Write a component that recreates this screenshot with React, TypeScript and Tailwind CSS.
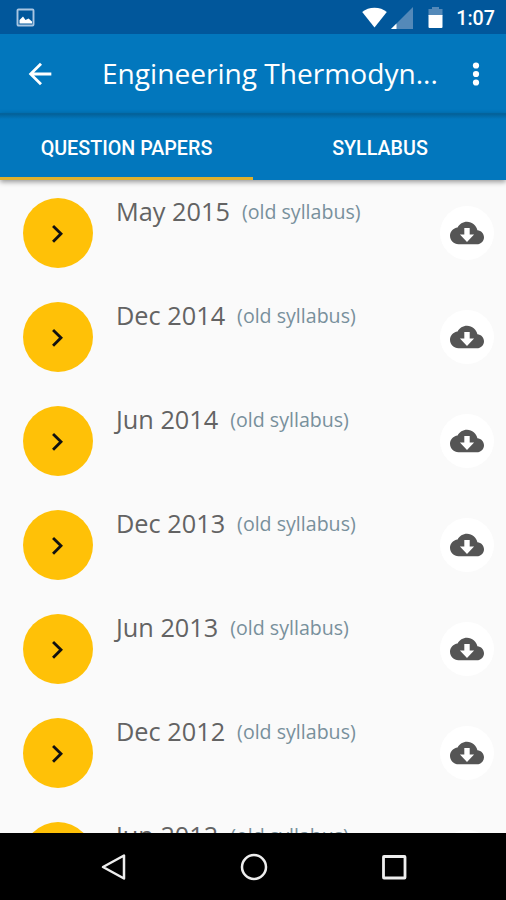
const papers = [
  'May 2015',
  'Dec 2014',
  'Jun 2014',
  'Dec 2013',
  'Jun 2013',
  'Dec 2012',
  'Jun 2012',
];

function StatusBar() {
  return (
    <div className="flex h-[34px] shrink-0 items-center bg-[#01579b] pl-4 pr-[11px] text-white">
      <svg viewBox="0 0 19 19" className="h-[19px] w-[19px]">
        <rect x="1.500" y="1.500" width="16" height="16" rx="1" fill="none" stroke="#a9c6e2" strokeWidth="1.900" />
        <path d="M3.500 15.500v-3.500L7 8.500l2.500 3.500 3-1.500 3.500 3v2z" fill="#fff" />
      </svg>
      <svg viewBox="0 0 26 21" className="ml-auto h-[21px] w-[26px]">
        <path d="M13.500 20.500 1.200 5C4.500 2.200 8.800.700 13.500.700s9 1.500 12.300 4.300z" fill="#fff" />
      </svg>
      <svg viewBox="0 0 22 22" className="ml-1 mt-0.5 h-[22px] w-[22px]">
        <path d="M0 22 22 0v22z" fill="#5489b9" />
        <path d="M0 22 5.500 16.500V22z" fill="#fff" />
      </svg>
      <svg viewBox="0 0 15 21" className="ml-[15px] h-[21px] w-[15px]">
        <path d="M4 0h7v2h3.500v7H.500V2H4z" fill="#5489b9" />
        <path d="M.500 8h14v12a1 1 0 0 1-1 1h-12a1 1 0 0 1-1-1z" fill="#fff" />
      </svg>
      <span className="ml-[13px] pt-[3px] font-['Roboto'] text-[19.7px] font-medium leading-none">1:07</span>
    </div>
  );
}

function Toolbar() {
  return (
    <div className="flex h-[79px] shrink-0 items-center bg-[#0277bd] pl-[23px] text-white">
      <svg viewBox="0 0 24 24" className="h-[34px] w-[34px]" fill="currentColor">
        <path d="M20 11H7.830l5.590-5.590L12 4l-8 8 8 8 1.410-1.410L7.830 13H20v-2z" />
      </svg>
      <h1 className="ml-[45px] w-[343px] whitespace-nowrap font-['Open_Sans'] text-[28.1px] leading-none">
        Engineering Thermodyn...
      </h1>
      <svg viewBox="0 0 24 24" className="ml-[14px] h-[34px] w-[34px]" fill="currentColor">
        <circle cx="12" cy="6" r="2.200" />
        <circle cx="12" cy="12" r="2.200" />
        <circle cx="12" cy="18" r="2.200" />
      </svg>
    </div>
  );
}

function Tabs() {
  return (
    <div className="z-10 grid h-[67px] shrink-0 grid-cols-2 border-t border-[#04639c] bg-[#0277bd] bg-[linear-gradient(#036199,#0277bd_5px)] font-['Roboto'] text-[19.7px] font-medium text-white shadow-[0_2px_5px_rgba(0,0,0,0.4)]">
      <button className="flex items-center justify-center border-b-[3px] border-[#dfb02c] pt-[6px]">
        QUESTION PAPERS
      </button>
      <button className="flex items-center justify-center border-b-[3px] border-transparent pl-px pt-[6px]">
        SYLLABUS
      </button>
    </div>
  );
}

function PaperRow({ title }: { title: string }) {
  return (
    <li className="flex h-[104px] shrink-0 items-start pl-[23px] pr-[12px] pt-[17px]">
      <div className="mt-[0.500px] flex h-[70px] w-[70px] items-center justify-center rounded-full bg-[#ffc107]">
        <svg viewBox="0 0 24 24" className="h-[34px] w-[34px]">
          <path d="M8.500 7.100l5.600 5.500-5.600 5.500" fill="none" stroke="#111" strokeWidth="2" />
        </svg>
      </div>
      <div className="ml-[23px] flex items-start gap-3 whitespace-nowrap font-['Open_Sans']">
        <span className="text-[25.3px] leading-[28px] text-[#636363]">{title}</span>
        <span className="text-[19.6px] leading-[30px] text-[#78909c]">(old syllabus)</span>
      </div>
      <div className="ml-auto mt-[9px] flex h-[54px] w-[54px] items-center justify-center rounded-full bg-white">
        <svg viewBox="0 0 24 24" className="h-[34px] w-[34px]">
          <path
            d="M19.350 10.040C18.670 6.590 15.640 4 12 4 9.110 4 6.600 5.640 5.350 8.040 2.340 8.360 0 10.910 0 14c0 3.310 2.690 6 6 6h13c2.760 0 5-2.240 5-5 0-2.640-2.050-4.780-4.650-4.960z"
            fill="#555"
          />
          <path d="M10.100 8.500h3.800v4.600h3.100L12 18.300l-5-5.200h3.100z" fill="#fff" />
        </svg>
      </div>
    </li>
  );
}

function NavBar() {
  return (
    <div className="z-10 flex h-[67px] shrink-0 items-center justify-center gap-[112px] bg-black pl-px">
      <svg viewBox="0 0 28 28" className="h-7 w-7" fill="none" stroke="#eee" strokeWidth="2.500" strokeLinejoin="round">
        <path d="M24 2.500v23L3 14z" />
      </svg>
      <svg viewBox="0 0 28 28" className="h-7 w-7" fill="none" stroke="#eee" strokeWidth="2.500">
        <circle cx="14" cy="14" r="12" />
      </svg>
      <svg viewBox="0 0 28 28" className="h-7 w-7" fill="none" stroke="#eee" strokeWidth="2.800" strokeLinejoin="round">
        <rect x="3.500" y="3.500" width="21.500" height="21.500" rx="0.500" />
      </svg>
    </div>
  );
}

export default function App() {
  return (
    <div className="flex h-[900px] w-[506px] flex-col overflow-hidden bg-[#fafafa]">
      <StatusBar />
      <Toolbar />
      <Tabs />
      <ul className="flex min-h-0 flex-1 flex-col overflow-hidden">
        {papers.map((title) => (
          <PaperRow key={title} title={title} />
        ))}
      </ul>
      <NavBar />
    </div>
  );
}
